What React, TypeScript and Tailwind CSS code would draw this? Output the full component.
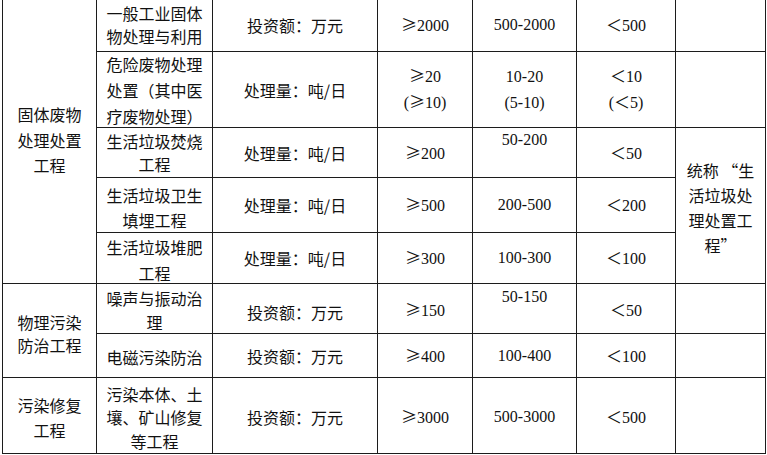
import React from "react";

const CJK = "font-['Noto_Sans_CJK_SC',sans-serif]";

function Sym({ c }: { c: string }) {
  return <span className={`inline-block w-4 text-center ${CJK}`}>{c}</span>;
}

function Num({ t }: { t: string }) {
  const parts: React.ReactNode[] = [];
  let buf = "";
  let k = 0;
  for (const ch of t) {
    if (ch === "≥" || ch === "＜") {
      if (buf) parts.push(<span key={k++}>{buf}</span>);
      buf = "";
      parts.push(<Sym key={k++} c={ch} />);
    } else buf += ch;
  }
  if (buf) parts.push(<span key={k++}>{buf}</span>);
  return <span className="font-['Liberation_Serif',serif] whitespace-pre">{parts}</span>;
}

function Cell({
  children,
  className = "",
}: {
  children?: React.ReactNode;
  className?: string;
}) {
  return (
    <div
      className={`border-r border-b border-[#1c1c1c] flex flex-col items-center text-center text-[16px] text-[#111] ${className}`}
    >
      {children}
    </div>
  );
}

function Lines({ items, lh }: { items: string[]; lh: string }) {
  return (
    <div className={lh}>
      {items.map((s, i) => (
        <div key={i} className="whitespace-pre">
          {s}
        </div>
      ))}
    </div>
  );
}

export default function App() {
  return (
    <div className={`w-[767px] h-[455px] bg-white ${CJK}`}>
      <div className="ml-[2px] border-l border-[#1c1c1c] grid grid-cols-[94px_116px_165px_95px_104px_99px_90px] grid-rows-[52px_76px_50px_55px_51px_50px_44px_76px] w-[765px]">
        {/* Row 1 */}
        <Cell className="row-span-5 justify-center pb-[2px]">
          <Lines items={["固体废物", "处理处置", "工程"]} lh="leading-[25.5px]" />
        </Cell>
        <Cell className="justify-center pb-[1px]">
          <Lines items={["一般工业固体", "物处理与利用"]} lh="leading-[23px]" />
        </Cell>
        <Cell className="justify-center pb-[1px] leading-[24px]">投资额：万元</Cell>
        <Cell className="justify-center pb-[1px] leading-[24px]"><Num t="≥2000" /></Cell>
        <Cell className="justify-center pb-[1px] leading-[24px]"><Num t="500-2000" /></Cell>
        <Cell className="justify-center pb-[1px] leading-[24px]"><Num t="＜500" /></Cell>
        <Cell />

        {/* Row 2 */}
        <Cell className="justify-center">
          <Lines items={["危险废物处理", "处置（其中医", "疗废物处理）"]} lh="leading-[26px]" />
        </Cell>
        <Cell className="justify-center pt-[1px] leading-[24px]">处理量：吨/日</Cell>
        <Cell className="justify-center pb-[2px]">
          <div className="leading-[25px]">
            <div><Num t="≥20" /></div>
            <div><Num t="(≥10)" /></div>
          </div>
        </Cell>
        <Cell className="justify-center pb-[2px]">
          <div className="leading-[25px]">
            <div><Num t="10-20" /></div>
            <div><Num t="(5-10)" /></div>
          </div>
        </Cell>
        <Cell className="justify-center pb-[2px]">
          <div className="leading-[25px]">
            <div><Num t="＜10" /></div>
            <div><Num t="(＜5)" /></div>
          </div>
        </Cell>
        <Cell />

        {/* Row 3 */}
        <Cell className="justify-center pt-[1px]">
          <Lines items={["生活垃圾焚烧", "工程"]} lh="leading-[23px]" />
        </Cell>
        <Cell className="justify-center leading-[24px]">处理量：吨/日</Cell>
        <Cell className="justify-center leading-[24px]"><Num t="≥200" /></Cell>
        <Cell className="justify-start leading-[24px]"><Num t="50-200" /></Cell>
        <Cell className="justify-center pt-[1px] leading-[24px]"><Num t="＜50" /></Cell>
        <Cell className="row-span-3 justify-center pt-[4px]">
          <Lines items={["统称 “生", "活垃圾处", "理处置工", "程”"]} lh="leading-[25px]" />
        </Cell>

        {/* Row 4 */}
        <Cell className="justify-center pt-[5px]">
          <Lines items={["生活垃圾卫生", "填埋工程"]} lh="leading-[25px]" />
        </Cell>
        <Cell className="justify-center leading-[24px]">处理量：吨/日</Cell>
        <Cell className="justify-center leading-[24px]"><Num t="≥500" /></Cell>
        <Cell className="justify-center leading-[24px]"><Num t="200-500" /></Cell>
        <Cell className="justify-center leading-[24px]"><Num t="＜200" /></Cell>

        {/* Row 5 */}
        <Cell className="justify-center pt-[4px]">
          <Lines items={["生活垃圾堆肥", "工程"]} lh="leading-[26px]" />
        </Cell>
        <Cell className="justify-center leading-[24px]">处理量：吨/日</Cell>
        <Cell className="justify-center leading-[24px]"><Num t="≥300" /></Cell>
        <Cell className="justify-center leading-[24px]"><Num t="100-300" /></Cell>
        <Cell className="justify-center leading-[24px]"><Num t="＜100" /></Cell>

        {/* Row 6 */}
        <Cell className="row-span-2 justify-center pt-[6px]">
          <Lines items={["物理污染", "防治工程"]} lh="leading-[23px]" />
        </Cell>
        <Cell className="justify-center pt-[3px]">
          <Lines items={["噪声与振动治", "理"]} lh="leading-[24px]" />
        </Cell>
        <Cell className="justify-center pt-[6px] leading-[24px]">投资额：万元</Cell>
        <Cell className="justify-center pt-[3px] leading-[24px]"><Num t="≥150" /></Cell>
        <Cell className="justify-start pt-[1px] leading-[24px]"><Num t="50-150" /></Cell>
        <Cell className="justify-center pt-[3px] leading-[24px]"><Num t="＜50" /></Cell>
        <Cell />

        {/* Row 7 */}
        <Cell className="justify-center pt-[2px] leading-[24px]">电磁污染防治</Cell>
        <Cell className="justify-center leading-[24px]">投资额：万元</Cell>
        <Cell className="justify-center leading-[24px]"><Num t="≥400" /></Cell>
        <Cell className="justify-center leading-[24px]"><Num t="100-400" /></Cell>
        <Cell className="justify-center leading-[24px]"><Num t="＜100" /></Cell>
        <Cell />

        {/* Row 8 */}
        <Cell className="justify-center pt-[4px]">
          <Lines items={["污染修复", "工程"]} lh="leading-[25px]" />
        </Cell>
        <Cell className="justify-center pt-[5px]">
          <Lines items={["污染本体、土", "壤、矿山修复", "等工程"]} lh="leading-[23.5px]" />
        </Cell>
        <Cell className="justify-center pt-[3px] leading-[24px]">投资额：万元</Cell>
        <Cell className="justify-center pt-[3px] leading-[24px]"><Num t="≥3000" /></Cell>
        <Cell className="justify-center pt-[3px] leading-[24px]"><Num t="500-3000" /></Cell>
        <Cell className="justify-center pt-[3px] leading-[24px]"><Num t="＜500" /></Cell>
        <Cell />
      </div>
    </div>
  );
}
